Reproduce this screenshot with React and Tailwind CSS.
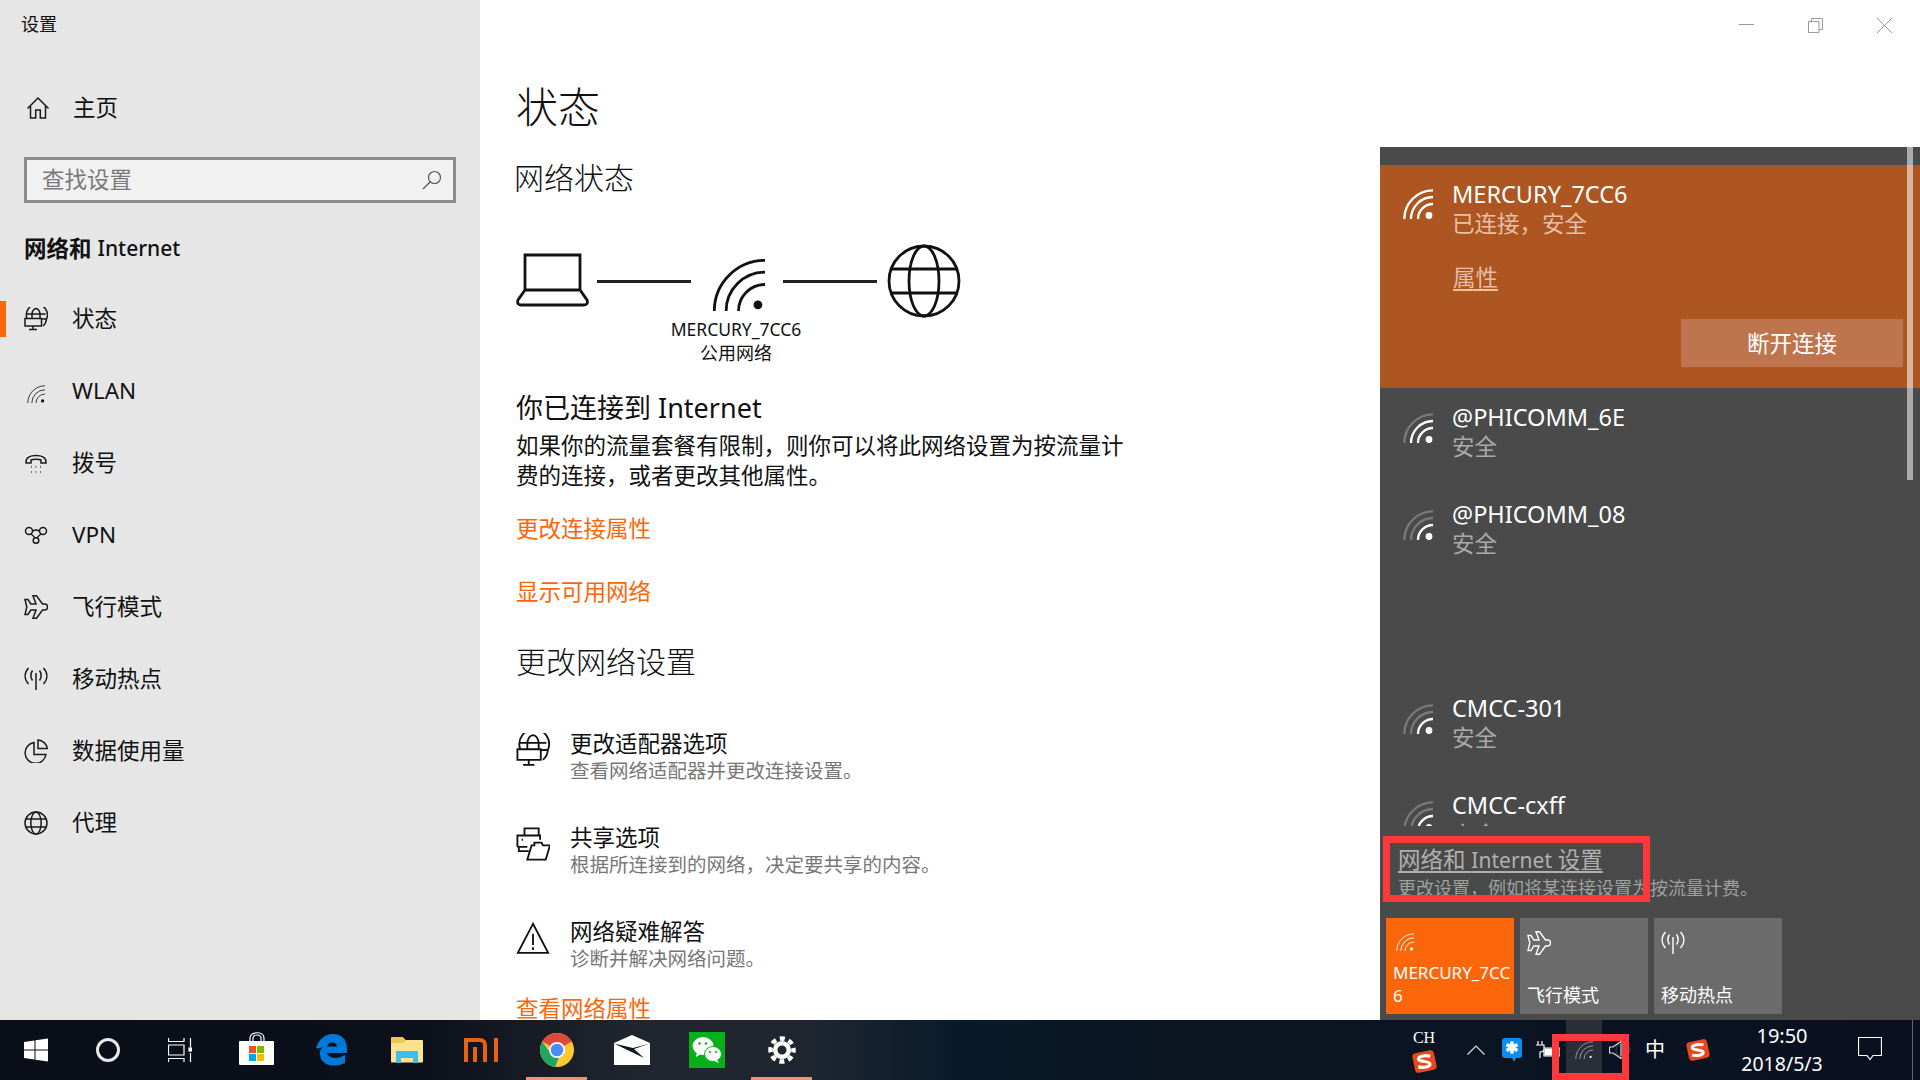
import React from "react";

const Wifi = ({ s = 30, c = ["#fff", "#fff", "#fff"], w = 2.6, dot = "#fff", r = 3.4, className = "" }) => (
  <svg width={s} height={s} viewBox="0 0 30 30" className={className} fill="none" strokeWidth={w}>
    <path d="M1.300 30 A 28.700 28.700 0 0 1 30 1.300" stroke={c[0]} />
    <path d="M8 30 A 22 22 0 0 1 30 8" stroke={c[1]} />
    <path d="M15 30 A 15 15 0 0 1 30 15" stroke={c[2]} />
    <circle cx="26" cy="26.500" r={r} fill={dot} />
  </svg>
);

const k = "#1a1a1a";
const Ico = ({ children, s = 24, sw = 1.5, c = k, className = "" }) => (
  <svg width={s} height={s} viewBox="0 0 24 24" fill="none" stroke={c} strokeWidth={sw} className={className}>{children}</svg>
);
const HomeI = (p) => <Ico {...p}><path d="M1.500 12.500 12 2l10.500 10.500M4.500 9.800V22h5.200v-8h4.600v8h5.200V9.800" /></Ico>;
const StatusI = (p) => <Ico {...p}><path d="M3 11.500A10.500 10.500 0 1 1 22.500 12 10.500 10.500 0 0 1 19 19M8 11V6.500C8.500 4 10 1.800 12 1.500c2 .3 3.500 2.500 4 5V11M2.500 7h19M17 12h5.500M1 11.500h16.500V19H1zM9 19v3.300M5 22.500h8" /></Ico>;
const DialI = (p) => <Ico {...p}><path d="M2 11c0-4 4-6.500 10-6.500s10 2.500 10 6.500v1h-5v-3c-2-1-8-1-10 0v3H2z" /><path d="M7 16h.8M11.500 16h.8M16 16h.8M7 21h.8M11.500 21h.8M16 21h.8" strokeWidth="1.600" /></Ico>;
const VpnI = (p) => <Ico {...p}><circle cx="5" cy="8" r="3.500" /><circle cx="19" cy="8" r="3.500" /><circle cx="12" cy="17.500" r="2.800" /><path d="M8.500 8c3-1.500 4-1.500 7 0M7 11c1.500 1 3 2.500 4 4M17 11c-1.500 1-3 2.500-4 4" /></Ico>;
const PlaneI = (p) => <Ico {...p}><path d="M1 4.500h3L6.800 9h5.200L9 .8h3.500L18.500 9H21c1.500 0 2.500 1.500 2.500 3s-1 3-2.500 3h-2.500l-6 8.200H9l3-8.200H6.800L4 19.500H1L2.800 12z" /></Ico>;
const HotI = (p) => <Ico {...p}><path d="M12 6v17M8.500 3.500c-2 3-2 7 0 10M15.500 3.500c2 3 2 7 0 10M4.500 1c-4.500 5-4.500 11 0 16M19.500 1c4.500 5 4.500 11 0 16" /></Ico>;
const DataI = (p) => <Ico {...p}><path d="M10 3.500a10.500 10.500 0 1 0 12 12H10z" /><path d="M14 1v8.500h9.300A10 10 0 0 0 14 1z" /></Ico>;
const GlobeI = (p) => <Ico {...p}><circle cx="12" cy="12" r="11" /><ellipse cx="12" cy="12" rx="5.200" ry="11" /><path d="M1.500 8h21M1.500 16h21" /></Ico>;
const Share = (p) => <Ico {...p}><path d="M6 6V1h10v5M1 14V6h16v3M1 14h7M2 14v3h7" /><path d="M8 23l3-10h2V11h5l1 2h5l-3 10z" /><path d="M4 9h1" /></Ico>;
const Warn = (p) => <Ico {...p}><path d="M12 2 1.300 22.500h21.400zM12 9v8M12 18.500v2" /></Ico>;

const Sogou = ({ s = 24 }) => (
  <svg width={s} height={s} viewBox="0 0 24 24" fill="none">
    <rect x="1.500" y="2.500" width="21" height="19" rx="3.500" fill="#e8491c" transform="rotate(-12 12 12)" />
    <path d="M18 7.500c-4-1.500-11-1.500-11.500 1.500S17.500 12 17 15s-7 3-11.500 1.500" stroke="#fff" strokeWidth="3" transform="rotate(-6 12 12)" />
  </svg>
);

const navs = [
  ["状态", StatusI, true],
  ["WLAN", null],
  ["拨号", DialI],
  ["VPN", VpnI],
  ["飞行模式", PlaneI],
  ["移动热点", HotI],
  ["数据使用量", DataI],
  ["代理", GlobeI],
];

function Sidebar() {
  return (
    <aside className="w-[480px] shrink-0 bg-[#e6e6e6] text-[#111] text-[22.5px]">
      <div className="h-[48px] flex items-center pl-[21px] text-[18px]">设置</div>
      <div className="h-[48px] mt-[36px] flex items-center pl-[26px]">
        <HomeI s={24} />
        <span className="ml-[23px]">主页</span>
      </div>
      <div className="mt-[25px] ml-[24px] w-[432px] h-[46px] border-[3px] border-[#8c8c8c] bg-[#f1f1f1] flex items-center justify-between pl-[15px] pr-[11px] text-[#7a7a7a]">
        <span>查找设置</span>
        <svg width="20" height="20" viewBox="0 0 20 20" fill="none" stroke="#555" strokeWidth="1.200"><circle cx="12.500" cy="7.500" r="6" /><path d="M8 12 1 19" /></svg>
      </div>
      <div className="mt-[23px] h-[46px] pl-[24px] flex items-center text-[#111]">
        <span className="font-bold">网络和</span>
        <span className="ml-[6px] text-[21px] font-medium">Internet</span>
      </div>
      <nav className="mt-[11px]">
        {navs.map(([t, I, active]) => (
          <div key={t} className="relative h-[72px] flex items-center pl-[24px]">
            {active && <span className="absolute left-0 top-[18px] w-[6px] h-[36px] bg-[#fb660b]" />}
            <span className="w-[24px] h-[24px] flex items-center justify-center">
              {I ? <I s={24} /> : <Wifi s={18} c={[k, k, k]} dot={k} w={1.400} r={2.800} className="mt-[5px]" />}
            </span>
            <span className="ml-[24px]">{t}</span>
          </div>
        ))}
      </nav>
    </aside>
  );
}

const Row = ({ I, t, d, cls }) => (
  <div className={"flex items-start " + cls}>
    <span className="w-[54px] pt-[3px]"><I s={34} sw={1.300} c="#111" /></span>
    <div>
      <div className="h-[27px] leading-[27px] text-[22.5px] text-[#111]">{t}</div>
      <div className="h-[28px] leading-[28px] text-[19.5px] text-[#777]">{d}</div>
    </div>
  </div>
);

function Content() {
  return (
    <main className="flex-1 bg-white pl-[36px] overflow-hidden text-[#111]">
      <div className="mt-[77px] h-[60px] leading-[60px] text-[42px] font-light">状态</div>
      <div className="mt-[21px] h-[40px] leading-[40px] text-[30px] -ml-[2px] font-light">网络状态</div>
      <div className="mt-[43px] h-[80px] flex items-center">
        <svg width="73" height="54" viewBox="0 0 73 54" fill="none" stroke="#111" strokeWidth="2.800" className="mt-[-2px]"><path d="M9 37V2h55v35M9 37 2 47c-1 3 0 5 3 5h63c3 0 4-2 3-5l-7-10z" /></svg>
        <span className="ml-[8px] w-[94px] h-[3px] bg-[#222]" />
        <Wifi s={53} c={["#111", "#111", "#111"]} dot="#111" w={1.600} r={2.500} className="ml-[21px] mt-[6px]" />
        <span className="ml-[18px] w-[94px] h-[3px] bg-[#222]" />
        <svg width="74" height="74" viewBox="0 0 74 74" fill="none" stroke="#111" strokeWidth="2.800" className="ml-[10px]"><circle cx="37" cy="37" r="35" /><ellipse cx="37" cy="37" rx="15" ry="35" /><path d="M4 25h66M4 49h66" /></svg>
      </div>
      <div className="-mt-[4px] ml-[120px] w-[200px] text-center text-[17.5px] leading-[24px]">
        <div>MERCURY_7CC6</div>
        <div className="text-[18px]">公用网络</div>
      </div>
      <div className="mt-[25px] h-[36px] leading-[36px] text-[27px]">你已连接到 Internet</div>
      <p className="mt-[5px] w-[620px] text-[22.5px] leading-[30px]">{"如果你的流量套餐有限制\uFF0C则你可以将此网络设置为按流量计费的连接\uFF0C或者更改其他属性\u3002"}</p>
      <div className="mt-[23px] h-[30px] leading-[30px] text-[22.5px] text-[#fb660b]">更改连接属性</div>
      <div className="mt-[33px] h-[30px] leading-[30px] text-[22.5px] text-[#fb660b]">显示可用网络</div>
      <div className="mt-[34px] h-[42px] leading-[42px] text-[30px] font-light">更改网络设置</div>
      <Row cls="mt-[47px]" I={StatusI} t="更改适配器选项" d="查看网络适配器并更改连接设置。" />
      <Row cls="mt-[39px]" I={Share} t="共享选项" d={"根据所连接到的网络\uFF0C决定要共享的内容\u3002"} />
      <Row cls="mt-[39px]" I={Warn} t="网络疑难解答" d="诊断并解决网络问题。" />
      <div className="mt-[21px] h-[30px] leading-[30px] text-[22.5px] text-[#fb660b]">查看网络属性</div>
    </main>
  );
}

const dim = ["#7a7a7a", "#7a7a7a", "#fff"];
const Net = ({ n, c }) => (
  <div className="h-[97px] flex pt-[14px] pl-[23px]">
    <Wifi s={30} c={c} w={2.300} className="mt-[11px]" />
    <div className="ml-[19px]">
      <div className="h-[30px] leading-[30px] text-[23.5px] text-white">{n}</div>
      <div className="h-[30px] leading-[30px] text-[22.5px] text-[#aaaaaa]">安全</div>
    </div>
  </div>
);

const Tile = ({ on, icon, children }) => (
  <div className={"w-[128px] h-[96px] overflow-hidden flex flex-col justify-between pl-[7px] pr-[1px] pt-[13px] pb-[7px] text-[18px] leading-[23px] text-white " + (on ? "bg-[#fb660b]" : "bg-[#6b6b6b]")}>
    <div className="h-[24px]">{icon}</div>
    <div className="break-all">{children}</div>
  </div>
);

function Flyout() {
  return (
    <div className="absolute left-[1380px] top-[147px] w-[540px] h-[873px] bg-[#4a4a4a] flex flex-col">
      <div className="h-[18px] shrink-0" />
      <div className="h-[223px] shrink-0 bg-[#ae5621] pt-[14px] pl-[23px] relative">
        <div className="flex">
          <Wifi s={30} w={2.300} className="mt-[10px]" />
          <div className="ml-[19px]">
            <div className="h-[30px] leading-[30px] text-[23.5px] text-white">MERCURY_7CC6</div>
            <div className="h-[30px] leading-[30px] text-[22.5px] text-[#e6bfa6]">{"已连接\uFF0C安全"}</div>
            <div className="mt-[24px] h-[30px] leading-[30px] text-[22.5px] text-[#e6bfa6] underline underline-offset-[3px] pl-[1px]">属性</div>
          </div>
        </div>
        <div className="absolute right-[17px] bottom-[21px] w-[222px] h-[48px] pt-[2px] bg-[#be754e] text-white text-[22.5px] flex items-center justify-center">断开连接</div>
      </div>
      <div className="flex-1 overflow-hidden">
        <Net n="@PHICOMM_6E" c={["#7a7a7a", "#fff", "#fff"]} />
        <Net n="@PHICOMM_08" c={dim} />
        <div className="h-[97px]" />
        <Net n="CMCC-301" c={dim} />
        <Net n="CMCC-cxff" c={dim} />
      </div>
      <div className="h-[194px] shrink-0 pl-[6px]">
        <div className="pl-[12px]">
          <div className="h-[30px] mt-[19px] leading-[30px] text-[22.5px] text-[#b0b0b0] underline underline-offset-[3px]">网络和 <span className="text-[21px]">Internet</span> 设置</div>
          <div className="h-[26px] leading-[26px] text-[18px] text-[#a0a0a0]">{"更改设置\uFF0C例如将某连接设置为按流量计费\u3002"}</div>
        </div>
        <div className="mt-[17px] flex gap-[6px]">
          <Tile on icon={<Wifi s={18} w={1.500} r={2.800} className="mt-[2px] ml-[3px]" />}><span className="text-[17px]">MERCURY_7CC6</span></Tile>
          <Tile icon={<PlaneI s={24} c="#fff" sw={1.400} />}>飞行模式</Tile>
          <Tile icon={<HotI s={24} c="#fff" sw={1.400} />}>移动热点</Tile>
        </div>
      </div>
      <span className="absolute left-[527px] top-0 w-[6px] h-[18px] bg-[#aaaaaa]" />
      <span className="absolute left-[527px] top-[18px] w-[6px] h-[223px] bg-[#dcb49c]" />
      <span className="absolute left-[527px] top-[241px] w-[6px] h-[92px] bg-[#aaaaaa]" />
    </div>
  );
}

const Slot = ({ w = "w-[75px]", bar, children }) => (
  <div className={"relative h-full flex items-center justify-center " + w}>
    {children}
    {bar && <span className="absolute bottom-0 left-[7px] right-[7px] h-[3px] bg-[#f88e74]" />}
  </div>
);

function Taskbar() {
  return (
    <footer className="h-[60px] shrink-0 flex text-white bg-[linear-gradient(90deg,#0a0e19_0%,#0b101b_22%,#21252d_33%,#1f2630_42%,#081a2a_50%,#0b1420_62%,#0a1422_75%,#0b1020_100%)]">
      <Slot w="w-[72px]">
        <svg width="24" height="24" viewBox="0 0 24 24" fill="#fff"><path d="M0 4l10.500-1.500v9H0zM11.500 2.300 24 .5v11H11.500zM0 12.500h10.500v9L0 20zM11.500 12.500H24v11l-12.500-1.800z" /></svg>
      </Slot>
      <Slot w="w-[72px]"><span className="w-[24px] h-[24px] rounded-full border-[3px] border-[#e8e8e8]" /></Slot>
      <Slot w="w-[72px]">
        <svg width="24" height="24" viewBox="0 0 24 24" fill="none" stroke="#fff" strokeWidth="1.200"><path d="M.5 0v3.500h15.500V0M.5 7h15.500v10H.5zM.5 24v-3.500h15.500V24M22.500 0v9M22.500 15v9" /><rect x="21" y="10" width="3" height="3" fill="#fff" /></svg>
      </Slot>
      <Slot w="w-[75px] ml-[3px]">
        <svg width="36" height="34" viewBox="0 0 36 34" className="mt-[-2px]">
          <path d="M11 9V6c0-7 14-7 14 0v3M14 9V6c0-4 8-4 8 0v3" fill="none" stroke="#fff" strokeWidth="1.200" />
          <rect y="9" width="35" height="24" rx="1" fill="#fff" />
          <rect x="10" y="14" width="7" height="7" fill="#f25022" /><rect x="18" y="14" width="7" height="7" fill="#7fba00" />
          <rect x="10" y="22" width="7" height="7" fill="#00a4ef" /><rect x="18" y="22" width="7" height="7" fill="#ffb900" />
        </svg>
      </Slot>
      <Slot>
        <svg width="31" height="32" viewBox="0 0 31 32" fill="none">
          <path d="M0 14C3 5 9 0 17 0c9 0 14 6 14 15v4H11c1 5 10 7 18 2v8c-10 5-24 3-25-8-.5-4 1-7 3-8-2 .5-5 2.500-7 1zM11 12.500h10C21 7 12 7 11 12.500z" fill="#0078d7" fillRule="evenodd" />
        </svg>
      </Slot>
      <Slot>
        <svg width="32" height="26" viewBox="0 0 32 26">
          <path d="M0 1.500C0 .5.500 0 1.500 0h10l3 3H31c.5 0 1 .5 1 1v20.500c0 .5-.5 1-1 1H1c-.5 0-1-.5-1-1z" fill="#ffe28f" />
          <path d="M0 1.500C0 .5.500 0 1.500 0h10L15 3.500 12 6H0z" fill="#f2c64a" />
          <path d="M5 26V14h22v12h-5v-5H10v5z" fill="#3dbbeb" />
        </svg>
      </Slot>
      <Slot>
        <svg width="36" height="24" viewBox="0 0 36 24" fill="none" stroke="#e8620f" strokeWidth="4">
          <path d="M2 24V2h14c3 0 5 2 5 5v17M11 24V9M32 0v24" />
        </svg>
      </Slot>
      <Slot bar>
        <svg width="34" height="34" viewBox="0 0 34 34">
          <circle cx="17" cy="17" r="17" fill="#fcc934" />
          <path d="M17 17 2.300 8.500A17 17 0 0 1 31.700 8.500z" fill="#db4a3c" />
          <path d="M2.300 8.500A17 17 0 0 0 15 33.900L22 17H8z" fill="#20a562" />
          <circle cx="17" cy="17" r="8" fill="#fff" /><circle cx="17" cy="17" r="6.300" fill="#4c8bf5" />
        </svg>
      </Slot>
      <Slot>
        <svg width="36" height="30" viewBox="0 0 36 30">
          <path d="M18 0 36 8v22H0V8z" fill="#fff" />
          <path d="M0 8.500 30 23 20 14 36 8.500 19 13z" fill="#0c1520" />
        </svg>
      </Slot>
      <Slot>
        <div className="w-[36px] h-[36px] bg-[#07af1a] flex items-center justify-center">
          <svg width="30" height="28" viewBox="0 0 30 28" fill="#fff">
            <ellipse cx="11" cy="10" rx="10.500" ry="9" /><path d="M5 16l-1 5 5-3z" />
            <ellipse cx="21" cy="18" rx="8.500" ry="7.500" stroke="#07af1a" /><path d="M25 24l2 3-5-2z" />
            <circle cx="7.500" cy="7.500" r="1.300" fill="#07af1a" /><circle cx="14" cy="7.500" r="1.300" fill="#07af1a" />
            <circle cx="18" cy="16" r="1.100" fill="#07af1a" /><circle cx="24" cy="16" r="1.100" fill="#07af1a" />
          </svg>
        </div>
      </Slot>
      <Slot bar>
        <svg width="28" height="28" viewBox="0 0 28 28" fill="none" stroke="#fff">
          <circle cx="14" cy="14" r="6.800" strokeWidth="4.500" />
          <circle cx="14" cy="14" r="11.500" strokeWidth="4.500" strokeDasharray="5 4.030" strokeDashoffset="2.500" />
        </svg>
      </Slot>
      <div className="ml-auto w-[520px] shrink-0 h-full flex items-center">
        <div className="w-[48px] flex flex-col items-center">
          <span className="text-[16px] leading-[22px] font-['Liberation_Serif',serif]">CH</span>
          <Sogou s={25} />
        </div>
        <svg width="18" height="10" viewBox="0 0 18 10" fill="none" stroke="#ddd" strokeWidth="1.200" className="ml-[19px]"><path d="M.5 9.500 9 1l8.500 8.500" /></svg>
        <svg width="20" height="24" viewBox="0 0 20 24" className="ml-[17px]">
          <path d="M3 0h14c2 0 3 1 3 3v14c0 2-1 3-3 3h-3l-2 4-2-4H3c-2 0-3-1-3-3V3c0-2 1-3 3-3z" fill="#0a8ef0" />
          <path d="M10 3.500v12M4.500 6.500l11 6M15.500 6.500l-11 6" stroke="#fff" strokeWidth="3.400" />
        </svg>
        <svg width="24" height="18" viewBox="0 0 24 18" className="ml-[14px]" fill="none" stroke="#fff"><path d="M2 0v4M6 0v4M0 4h8v4c0 2-2 3-4 3v6M8 7h16v8H8z" strokeWidth="1.200" /><path d="M9 8h12v6H9z" fill="#fff" /></svg>
        <div className="ml-[6px] w-[36px] h-full bg-[#2a2e38] flex items-center justify-center">
          <Wifi s={18} w={1.100} c={["#ccc", "#ccc", "#ccc"]} dot="#fff" r={1.800} />
        </div>
        <svg width="22" height="18" viewBox="0 0 22 18" className="ml-[7px]" fill="none" stroke="#ddd" strokeWidth="1.200"><path d="M.5 6H4l8-5.500v17L4 12H.5z" /><path d="M16 7v4" /><circle cx="14" cy="9" r="7" stroke="#444" strokeWidth="1" /></svg>
        <span className="ml-[15px] w-[18px] text-[20px] leading-none flex justify-center">中</span>
        <span className="ml-[22px]"><Sogou s={24} /></span>
        <div className="ml-[30px] w-[84px] text-center text-[19.500px] leading-[28px]">
          <div className="text-[20px]">19:50</div>
          <div>2018/5/3</div>
        </div>
        <svg width="24" height="26" viewBox="0 0 24 26" fill="none" stroke="#fff" strokeWidth="1.200" className="ml-[34px]"><path d="M.5.500h23v18H15l-3 4-3-4H.5z" /></svg>
        <span className="ml-[30px] w-px h-full bg-[#666]" />
      </div>
    </footer>
  );
}

export default function App() {
  return (
    <div className="relative w-[1920px] h-[1080px] overflow-hidden flex flex-col font-['Noto_Sans','Noto_Sans_CJK_SC',sans-serif]">
      <div className="flex-1 flex min-h-0">
        <Sidebar />
        <Content />
      </div>
      <Taskbar />
      <svg className="absolute left-[1739px] top-[17px]" width="153" height="16" viewBox="0 0 153 16" fill="none" stroke="#999" strokeWidth="1">
        <path d="M0 7.500h15M69.500 4.500h10.500v11H69.500zM72.500 4.500V1.500h11v11h-3.500M138 1l15 15M153 1l-15 15" />
      </svg>
      <Flyout />
      <span className="absolute left-[1383px] top-[836px] w-[267px] h-[66px] border-[7px] border-[#ff383c]" />
      <span className="absolute left-[1552px] top-[1034px] w-[77px] h-[46px] border-[7px] border-[#ff383c]" />
    </div>
  );
}
